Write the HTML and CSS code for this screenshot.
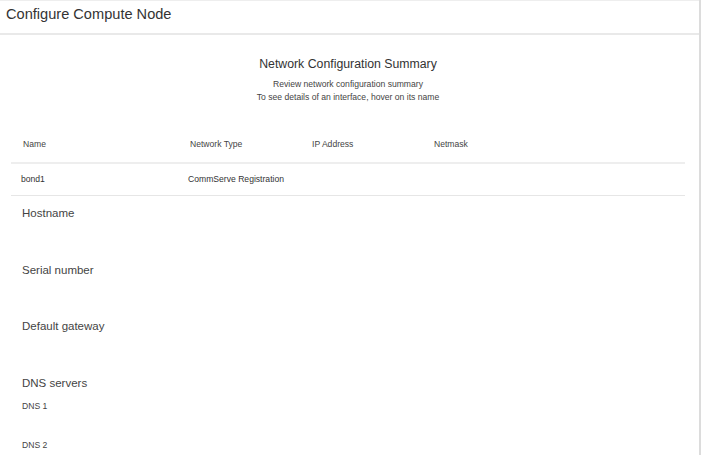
FILE: index.html
```html
<!DOCTYPE html>
<html lang="en">
<head>
<meta charset="utf-8">
<title>Configure Compute Node</title>
<link rel="stylesheet" href="styles.css">
</head>
<body>
<div class="page">
  <header class="page-header">
    <h1 class="page-title">Configure Compute Node</h1>
  </header>
  <main class="content">
    <section class="summary">
      <h2 class="summary-title">Network Configuration Summary</h2>
      <p class="summary-sub">Review network configuration summary<br>To see details of an interface, hover on its name</p>
    </section>
    <div class="net-table">
      <div class="row head">
        <div class="cell">Name</div>
        <div class="cell">Network Type</div>
        <div class="cell">IP Address</div>
        <div class="cell">Netmask</div>
      </div>
      <div class="row data">
        <div class="cell">bond1</div>
        <div class="cell">CommServe Registration</div>
        <div class="cell"></div>
        <div class="cell"></div>
      </div>
    </div>
    <div class="fields">
      <div class="field"><div class="field-label">Hostname</div></div>
      <div class="field"><div class="field-label">Serial number</div></div>
      <div class="field"><div class="field-label">Default gateway</div></div>
      <div class="field dns">
        <div class="field-label">DNS servers</div>
        <div class="dns-list">
          <div class="dns-item">DNS 1</div>
          <div class="dns-item">DNS 2</div>
        </div>
      </div>
    </div>
  </main>
</div>
</body>
</html>
```
FILE: styles.css
```css
* { box-sizing: border-box; }
html, body {
  margin: 0;
  padding: 0;
  background: #fff;
}
body {
  font-family: "Liberation Sans", Arial, sans-serif;
  color: #333;
}
.page {
  width: 701px;
  min-height: 455px;
  border-right: 2px solid #dcdcdc;
}
.page-header {
  height: 35px;
  border-top: 1px solid #eeeeee;
  border-bottom: 2px solid #e9e9e9;
  padding: 0 6px;
}
.page-title {
  margin: 0;
  font-size: 14.6px;
  font-weight: normal;
  line-height: 26px;
  color: #333;
}
.content {
  padding: 0 14px 0 11px;
}
.summary {
  text-align: center;
  padding-top: 22px;
}
.summary-title {
  margin: 0;
  font-size: 12.3px;
  font-weight: normal;
  line-height: 15px;
  color: #333;
}
.summary-sub {
  margin: 6px 0 0;
  font-size: 8.6px;
  line-height: 13px;
  color: #444;
}
.net-table {
  margin-top: 22px;
}
.row {
  display: grid;
  grid-template-columns: 167px 122px 122px 1fr;
  font-size: 8.6px;
  line-height: 13px;
  color: #444;
}
.row.head {
  border-bottom: 2px solid #eeeeee;
}
.row.head .cell {
  padding: 12px 0 11px 12px;
}
.row.data {
  border-bottom: 1px solid #e6e6e6;
  color: #333;
}
.row.data .cell {
  padding: 9px 0 9px 10px;
  min-height: 31px;
}
.fields {
  padding: 10px 0 0 11px;
}
.field {
  height: 56.7px;
}
.field-label {
  font-size: 11.5px;
  line-height: 14px;
  color: #444;
}
.field.dns {
  height: auto;
}
.dns-list {
  padding-top: 10px;
}
.dns-item {
  height: 39px;
  font-size: 8.6px;
  line-height: 13px;
  color: #444;
}
```
